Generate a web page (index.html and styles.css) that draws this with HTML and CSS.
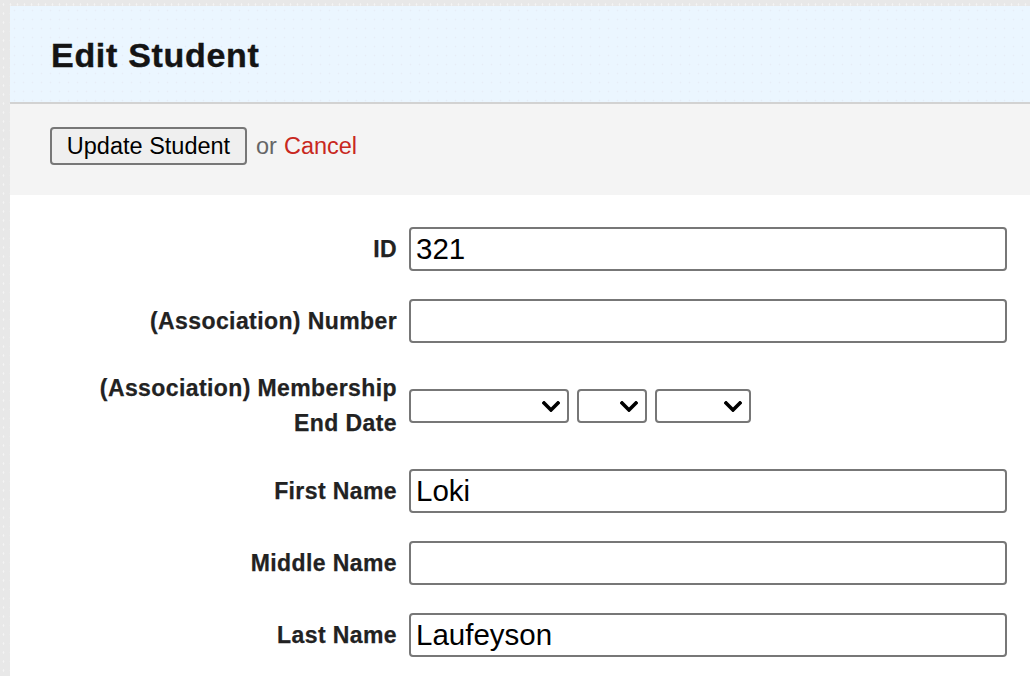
FILE: index.html
```html
<!DOCTYPE html>
<html lang="en">
<head>
<meta charset="utf-8">
<title>Edit Student</title>
<link rel="stylesheet" href="styles.css">
</head>
<body>
<div class="page">
  <header class="page-header">
    <h1 class="title">Edit Student</h1>
  </header>
  <div class="toolbar">
    <button class="btn" type="button">Update Student</button>
    <span class="or">or</span>
    <a class="cancel" href="#">Cancel</a>
  </div>
  <form class="form">
    <div class="row">
      <label class="label">ID</label>
      <input class="input" type="text" value="321">
    </div>
    <div class="row">
      <label class="label">(Association) Number</label>
      <input class="input" type="text" value="">
    </div>
    <div class="row">
      <label class="label">(Association) Membership<br>End Date</label>
      <div class="selects">
        <select class="select select-month"><option></option></select>
        <select class="select select-day"><option></option></select>
        <select class="select select-year"><option></option></select>
      </div>
    </div>
    <div class="row">
      <label class="label">First Name</label>
      <input class="input" type="text" value="Loki">
    </div>
    <div class="row">
      <label class="label">Middle Name</label>
      <input class="input" type="text" value="">
    </div>
    <div class="row">
      <label class="label">Last Name</label>
      <input class="input" type="text" value="Laufeyson">
    </div>
  </form>
</div>
</body>
</html>
```
FILE: styles.css
```css
html, body {
  margin: 0;
  padding: 0;
}
body {
  background-color: #e8e8e8;
  background-image: radial-gradient(rgba(255,255,255,0.5) 0.7px, transparent 1.1px);
  background-size: 7px 9px;
  padding: 6px 0 0 10px;
  overflow: hidden;
  height: 676px;
  box-sizing: border-box;
  font-family: "Liberation Sans", Arial, Helvetica, sans-serif;
}
.page {
  background: #fff;
  min-height: 700px;
}
.page-header {
  height: 96px;
  display: flex;
  align-items: center;
  padding-left: 41px;
  background-color: #ebf6ff;
  background-image: radial-gradient(rgba(215,205,215,0.22) 0.7px, transparent 1.1px);
  background-size: 9px 9px;
  border-bottom: 2px solid #d2d2d2;
}
.title {
  margin: 0;
  font-size: 34px;
  letter-spacing: 0.7px;
  font-weight: bold;
  color: #141414;
  padding-top: 2px;
  -webkit-text-stroke: 0.4px #141414;
}
.toolbar {
  background: #f4f4f4;
  padding: 23px 40px 30px;
  display: flex;
  align-items: center;
  font-size: 23.5px;
}
.btn {
  font-family: "Liberation Sans", Arial, Helvetica, sans-serif;
  font-size: 23.5px;
  color: #000;
  background: #efefef;
  border: 2px solid #777;
  border-radius: 4px;
  height: 38px;
  width: 197px;
  padding: 0;
  margin: 0;
}
.or {
  color: #666;
  margin-left: 9px;
}
.cancel {
  color: #c8281e;
  text-decoration: none;
  margin-left: 7px;
}
.form {
  padding: 32px 0 20px 87px;
  display: flex;
  flex-direction: column;
  gap: 28px;
}
.row {
  display: flex;
  align-items: center;
  min-height: 44px;
}
.label {
  width: 310px;
  margin-left: -10px;
  text-align: right;
  font-weight: bold;
  font-size: 23px;
  letter-spacing: 0.4px;
  line-height: 35px;
  color: #222;
  margin-right: 12px;
  -webkit-text-stroke: 0.25px #222;
}
.input {
  box-sizing: border-box;
  width: 598px;
  height: 44px;
  border: 2px solid #777;
  border-radius: 4px;
  padding: 0 5px;
  font-family: "Liberation Sans", Arial, Helvetica, sans-serif;
  font-size: 29.5px;
  color: #000;
  background: #fff;
  margin: 0;
}
.selects {
  display: flex;
  gap: 8px;
}
.select {
  appearance: none;
  -webkit-appearance: none;
  box-sizing: border-box;
  height: 34px;
  border: 2px solid #777;
  border-radius: 4px;
  background-color: #fff;
  background-image: url("data:image/svg+xml,%3Csvg xmlns='http://www.w3.org/2000/svg' width='18' height='11' viewBox='0 0 18 11'%3E%3Cpath d='M2 2 L9 9 L16 2' fill='none' stroke='%23000' stroke-width='3.6' stroke-linecap='square'/%3E%3C/svg%3E");
  background-repeat: no-repeat;
  background-position: right 7px center;
  background-size: 18px 11px;
  margin: 0;
  padding: 0;
}
.select-month { width: 160px; }
.select-day { width: 70px; }
.select-year { width: 96px; }
```
